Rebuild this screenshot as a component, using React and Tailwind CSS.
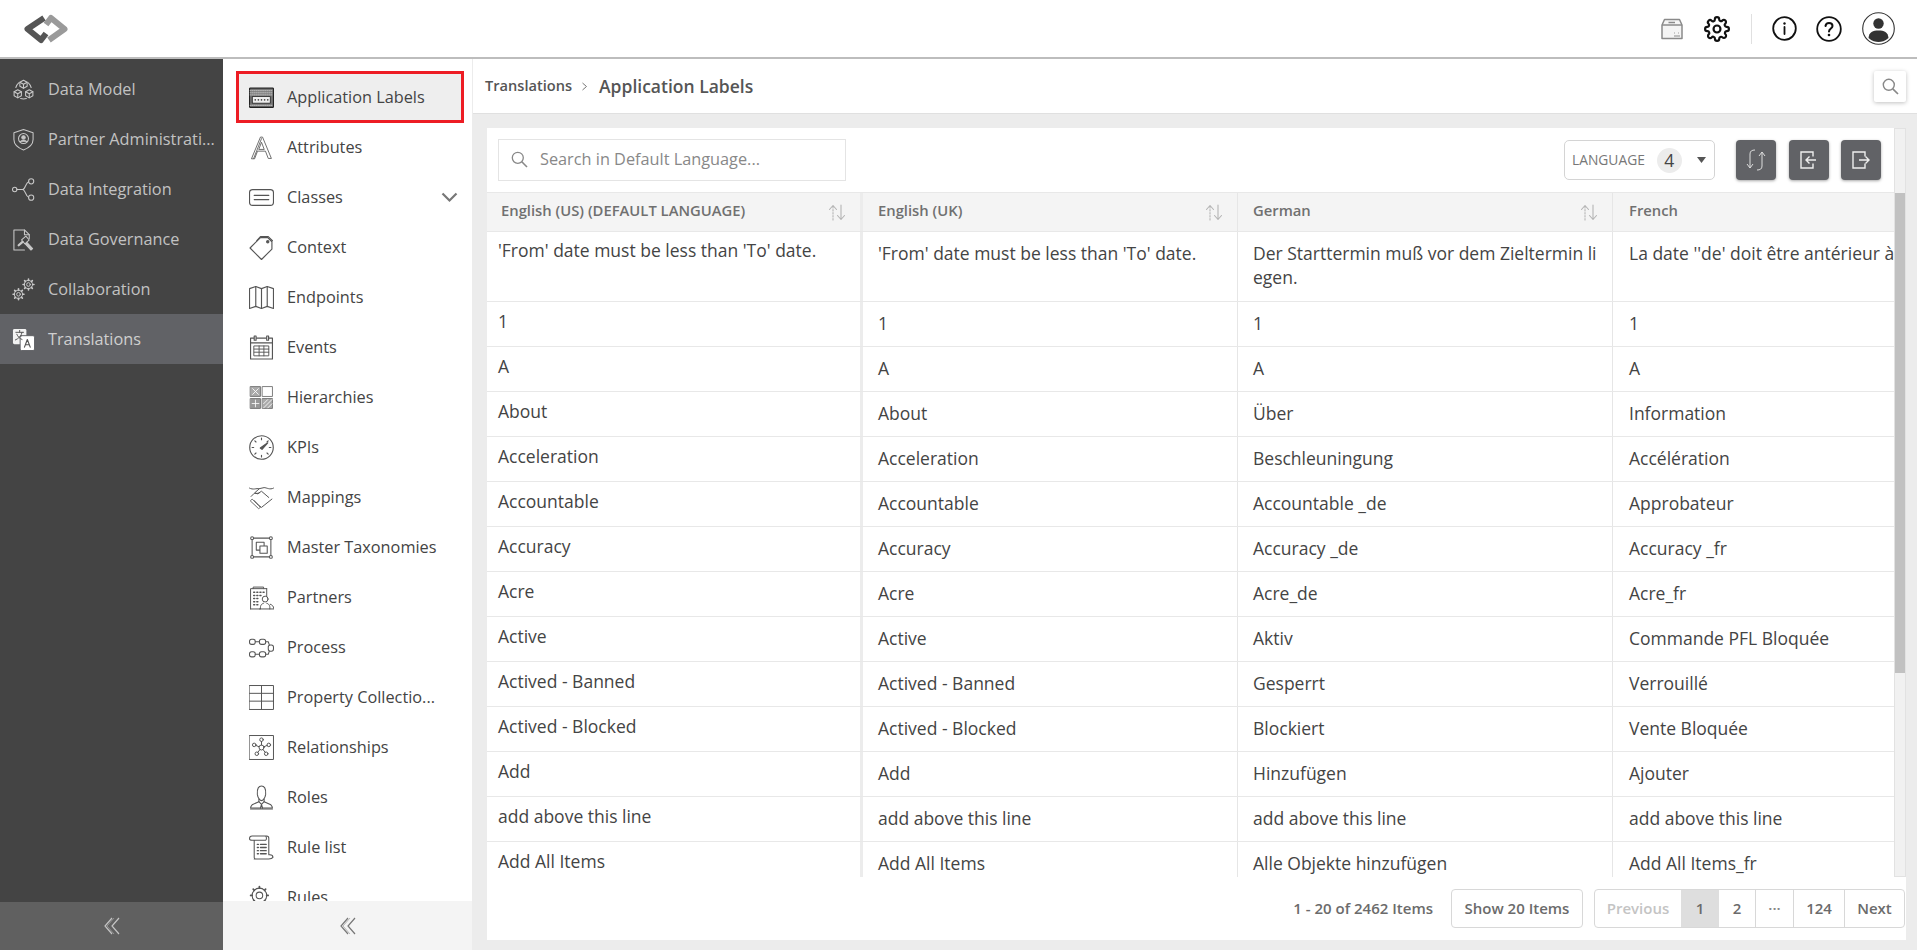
import React from 'react';

const S = ({ children, size = 25, className = '', sw = 1.1, stroke = 'currentColor' }) => (
  <svg width={size} height={size} viewBox="0 0 24 24" fill="none" stroke={stroke} strokeWidth={sw} strokeLinecap="round" strokeLinejoin="round" className={`shrink-0 ${className}`}>
    {children}
  </svg>
);

const Cube = ({ x, y }) => (
  <g transform={`translate(${x} ${y})`}>
    <path d="M0 -4.2 3.8 -2.1V2.1L0 4.2 -3.8 2.1V-2.1Z" />
    <path d="M-3.8 -2.1 0 0 3.8 -2.1M0 0V4.2" />
  </g>
);

const Gear = ({ x, y, r = 4 }) => {
  const t = [0, 45, 90, 135, 180, 225, 270, 315];
  return (
    <g transform={`translate(${x} ${y})`}>
      <circle r={r} />
      <circle r={r * 0.45} />
      {t.map((a) => (
        <path key={a} d={`M0 ${-r}V${-r - 1.4}`} strokeWidth="1.7" transform={`rotate(${a})`} />
      ))}
    </g>
  );
};

const Icons = {
  dataModel: <S><Cube x={12} y={6.5} /><Cube x={6} y={16.5} /><Cube x={18} y={16.5} /><path d="M4 10A9 9 0 0 1 7 5M20 10A9 9 0 0 0 17 5M9 21.5A10 10 0 0 0 15 21.5" /></S>,
  partner: <S><path d="M12 1.500 22 5V12C22 17.500 17 21 12 23 7 21 2 17.500 2 12V5Z" /><circle cx="12" cy="11" r="5.200" /><circle cx="12" cy="9.800" r="1.800" fill="currentColor" /><path d="M8.800 14.400C9.500 12.800 14.500 12.800 15.200 14.400" fill="currentColor" /></S>,
  integ: <S><circle cx="2.800" cy="12" r="2.300" /><circle cx="20" cy="3.500" r="2.700" /><circle cx="20" cy="20.500" r="2.700" /><path d="M5.100 12H11C14 12 14 5 17.400 3.800M11 12C14 12 14 19 17.400 20.200" /></S>,
  gov: <S><path d="M13 23H2V2H13L18 7V11" /><path d="M13 2V7H18" /><path d="M10 12.500 14.500 8.500 18 12.500 13.500 16.500Z" /><path d="M15.500 15 21.500 21.500 19.800 23 13.800 16.500" fill="currentColor" /><path d="M7 18 11 14.500" strokeWidth="2.400" /></S>,
  collab: <S sw={1}><Gear x={6.800} y={17} r={4.300} /><Gear x={17.200} y={6.800} r={4.300} /></S>,
  translate: <S sw={0}><rect x="1" y="1" width="14" height="16" rx="1.500" fill="#f2f2f2" stroke="none" /><rect x="8.500" y="8" width="15" height="15.500" rx="1.500" fill="#fff" stroke="#616266" strokeWidth="1" /><path d="M4 4.500H12M8 2.500V4.500M10.500 4.500C10 8 7 11 3.500 12.500M5 6.500C6 9 8 11 10.500 12" stroke="#555" strokeWidth="1" /><path d="M13 20 16 12 19 20M14 17.500H18" stroke="#555" strokeWidth="1.200" /></S>,
  appLabels: <S><rect x="0.500" y="3" width="23" height="18.500" rx="0.800" fill="#777" stroke="#222" /><rect x="3.500" y="11" width="17" height="6.500" fill="#eee" stroke="#222" strokeWidth="0.800" /><path d="M6 14.200H6.010M9 14.200H9.010M12 14.200H12.010M15 14.200H15.010M18 14.200H18.010" strokeWidth="1.600" /><path d="M1 5.500H23M1 7.500H23M1 9.500H23M1 19.500H23" stroke="#ddd" strokeWidth="0.700" strokeDasharray="1 1" /></S>,
  attributes: <S sw={0.8}><path d="M2.500 22.500 11 2H13L21.500 22.500H18.500L15.800 15.500H8.200L5.500 22.500Z" /><path d="M9.500 13.500 12 7 14.500 13.500Z" /><path d="M4.500 22.500 12 3.500" /></S>,
  classes: <S><rect x="0.500" y="4.500" width="23" height="15" rx="3" /><path d="M5 10H19M5 14H19" /></S>,
  context: <S><path d="M1 12.500 11 2.500H18L22 6.500V13.500L12 23.500Z" /><path d="M7.500 5.500 11 1.500H18.500L22.500 5.500" /><circle cx="18" cy="6.500" r="1.100" fill="currentColor" /></S>,
  endpoints: <S><path d="M0.500 3.500 6.500 1.500 12 3.500 17.500 1.500 23.500 3.500V22.500L17.500 20.500 12 22.500 6.500 20.500 0.500 22.500Z" /><path d="M6.500 1.500V20.500M12 3.500V22.500M17.500 1.500V20.500" /></S>,
  events: <S><rect x="1.500" y="3" width="21" height="20" /><path d="M1.500 7.500H22.500" /><path d="M5 10.500H19V20H5ZM5 13.500H19M5 16.500H19M9.700 10.500V20M14.300 10.500V20" strokeWidth="0.900" /><rect x="5" y="1" width="1.800" height="4" fill="#fff" /><rect x="17" y="1" width="1.800" height="4" fill="#fff" /></S>,
  hierarchies: <S sw={0.9} stroke="#777"><rect x="1.500" y="1.500" width="9.500" height="9.500" fill="#aaa" /><rect x="13" y="1.500" width="9.500" height="9.500" /><rect x="1.500" y="13" width="9.500" height="9.500" fill="#999" /><rect x="13" y="13" width="9.500" height="9.500" fill="#aaa" /><path d="M3.500 3.500 9 9M9 3.500 3.500 9M6.200 14.500V21M3 17.800H9.500M14 22 22 14M14 18 18 14M18 22 22 18" stroke="#fff" strokeWidth="0.800" /></S>,
  kpis: <S><circle cx="12" cy="12" r="11.300" /><path d="M12 3V4.500M3 12H4.500M21 12H19.500M5.600 5.600 6.700 6.700M18.400 5.600 17.300 6.700M5.600 18.400 6.700 17.300M18.400 18.400 17.300 17.300M12 21V19.500" /><path d="M10.800 12.500 18 7.500 12.500 13.800Z" fill="currentColor" /></S>,
  mappings: <S sw={0.95}><path d="M0.500 3C4 5 7 3 10 3.500L14.500 2.500C17 2.500 20 5 23.500 3" /><path d="M2 11 5 8H9.500M5 15 10 20 12 21.500 14.500 19.500 22 13.500" /><path d="M10 3.500 5.500 7.500 8 8.500 12 6 19 12" /><path d="M1.500 15 3 13.500 5 15.500 7 17.500 9 19.500 11 21.500 9.500 22.500Z" strokeWidth="0.800" /></S>,
  master: <S sw={1}><path d="M3 3H21V21H3Z" /><circle cx="3" cy="3" r="1.400" fill="#fff" /><circle cx="21" cy="3" r="1.400" fill="#fff" /><circle cx="3" cy="21" r="1.400" fill="#fff" /><circle cx="21" cy="21" r="1.400" fill="#fff" /><rect x="7" y="7" width="7.500" height="7.500" /><rect x="10.500" y="10.500" width="7" height="7" fill="#fff" /></S>,
  partners: <S sw={0.95}><path d="M1.500 23V3.500H14V2H4V3.500M17 3.500H14M17 3.500V11M1.500 23H10" /><path d="M4.500 7H5.500M7.500 7H8.500M10.500 7H11.500M13.500 7H14.500M4.500 10H5.500M7.500 10H8.500M10.500 10H11.500M4.500 13H5.500M7.500 13H8.500M4.500 16H5.500M7.500 16H8.500M4.500 19H5.500M7.500 19H8.500" strokeWidth="1.400" /><circle cx="15.500" cy="13.500" r="2.800" /><path d="M11 23C10.500 19 12.500 18 14 17.500M20 23C20.500 19 18.500 18 17 17.500M10 23H24C23.500 20 22 19 20.500 18.500" /></S>,
  process: <S sw={1}><rect x="0.500" y="4" width="5.500" height="5" rx="2" /><rect x="10" y="4" width="6" height="5" rx="2" /><rect x="0.500" y="16" width="5.500" height="5" rx="2" /><rect x="10" y="16" width="6" height="5" rx="2" /><path d="M6 6.500H10M6 18.500H10M16 6.500H18.500L19.500 9.500M16 18.500H18.500L19.500 15.500" /><rect x="18.500" y="9.500" width="5" height="6" rx="2" /></S>,
  property: <S sw={0.95}><rect x="0.500" y="0.500" width="23" height="23" /><path d="M12 0.500V23.500M0.500 8H23.500M0.500 15.500H23.500" /></S>,
  relationships: <S sw={0.95}><rect x="0.500" y="0.500" width="23" height="23" /><circle cx="12" cy="12" r="2.400" /><circle cx="12" cy="4.500" r="1.700" /><circle cx="5" cy="9.500" r="1.700" /><circle cx="19" cy="9.500" r="1.700" /><circle cx="7.500" cy="18" r="1.700" /><circle cx="16.500" cy="18" r="1.700" /><path d="M12 6.200V9.600M6.600 10 9.700 11.300M17.400 10 14.300 11.300M8.500 16.600 10.500 14M15.500 16.600 13.500 14" /></S>,
  roles: <S sw={1}><path d="M8 9C7.500 3 9.500 1 12 1S16.500 3 16 9C15.500 13 13 15 12 15S8.500 13 8 9Z" /><path d="M9.500 13.500V16L3 19C2 20 1.500 21 1.500 22H22.500C22.500 21 22 20 21 19L14.500 16V13.500" /><path d="M9.500 16 12 18.500 14.500 16M12 18.500 11 22M12 18.500 13 22M1.500 23H22.500" /></S>,
  ruleList: <S sw={1}><path d="M5 23H19C21 23 22 23 23 21.500 23 19.500 21.500 19 20 19H19V3C19 1.500 18 1 17 1H3C1 1 0.500 2.500 0.500 3.500S1.500 5 3 5H5V21.500C5 22.500 5.500 23 6.500 23M16 1C17 2 17 4.500 16 5H5" /><path d="M8 9H9M11 9H16.500M8 12H9M11 12H16.500M8 15H9M11 15H16.500M8 18H9M11 18H16.500" strokeWidth="1.300" /></S>,
  rules: <S sw={1}><Gear x={10} y={10} r={7} /><path d="M14 22 18 17H23V22Z" fill="#888" /></S>,
};

const nav = [
  ['Data Model', 'dataModel'],
  ['Partner Administrati...', 'partner'],
  ['Data Integration', 'integ'],
  ['Data Governance', 'gov'],
  ['Collaboration', 'collab'],
  ['Translations', 'translate', true],
];

const sub = [
  ['Attributes', 'attributes'],
  ['Classes', 'classes', true],
  ['Context', 'context'],
  ['Endpoints', 'endpoints'],
  ['Events', 'events'],
  ['Hierarchies', 'hierarchies'],
  ['KPIs', 'kpis'],
  ['Mappings', 'mappings'],
  ['Master Taxonomies', 'master'],
  ['Partners', 'partners'],
  ['Process', 'process'],
  ['Property Collectio...', 'property'],
  ['Relationships', 'relationships'],
  ['Roles', 'roles'],
  ['Rule list', 'ruleList'],
  ['Rules', 'rules'],
];

const rows = [
  ['1', '1', '1', '1'],
  ['A', 'A', 'A', 'A'],
  ['About', 'About', 'Über', 'Information'],
  ['Acceleration', 'Acceleration', 'Beschleuningung', 'Accélération'],
  ['Accountable', 'Accountable', 'Accountable _de', 'Approbateur'],
  ['Accuracy', 'Accuracy', 'Accuracy _de', 'Accuracy _fr'],
  ['Acre', 'Acre', 'Acre_de', 'Acre_fr'],
  ['Active', 'Active', 'Aktiv', 'Commande PFL Bloquée'],
  ['Actived - Banned', 'Actived - Banned', 'Gesperrt', 'Verrouillé'],
  ['Actived - Blocked', 'Actived - Blocked', 'Blockiert', 'Vente Bloquée'],
  ['Add', 'Add', 'Hinzufügen', 'Ajouter'],
  ['add above this line', 'add above this line', 'add above this line', 'add above this line'],
  ['Add All Items', 'Add All Items', 'Alle Objekte hinzufügen', 'Add All Items_fr'],
];

const Logo = () => (
  <svg width="46" height="32" viewBox="0 0 46 32" fill="none" strokeWidth="6" strokeLinejoin="round" strokeLinecap="butt">
    <path d="M26 27 41.500 16 28 5 23 11.500" stroke="#9a9a9a" />
    <path d="M21 5 4.500 16 18 27 23 20.500" stroke="#555" />
  </svg>
);

const SortIcon = () => (
  <svg width="18" height="17" viewBox="0 0 18 17" fill="none" stroke="#b5b5b5" strokeWidth="1.100" strokeLinecap="round" strokeLinejoin="round">
    <path d="M5 16V2" strokeDasharray="1.500 1.500" />
    <path d="M1.500 5.500 5 1.500 8.500 5.500" />
    <path d="M13 1V15M9.500 11.500 13 15.500 16.500 11.500" />
  </svg>
);

const HeaderCell = ({ w, label, sort, thick }) => (
  <div className={`flex h-full items-center justify-between shrink-0 ${w} ${thick ? 'border-r-[3px] border-[#ececec] pl-[14px] pr-[14px]' : 'border-r border-[#e6e6e6] pl-[15px] pr-[14px]'}`}>
    <span className="pb-[3px] text-[14.8px] font-semibold text-[#707070] whitespace-nowrap">{label}</span>
    {sort && <SortIcon />}
  </div>
);

const Cell = ({ w, first, children, last }) => (
  <div className={`flex h-full items-center shrink-0 text-[17.5px] leading-[24px] text-[#444] ${w} ${first ? 'border-r-[3px] border-[#ececec] pl-[11px] pb-[6px]' : last ? 'pl-[16px] pb-[3px]' : 'border-r border-[#e6e6e6] pl-[15px] pb-[3px]'}`}>
    <span className="whitespace-nowrap">{children}</span>
  </div>
);

const cols = ['w-[376px]', 'w-[375px]', 'w-[375px]', 'w-[283px]'];

export default function App() {
  return (
    <div className="flex h-[950px] w-[1917px] flex-col overflow-hidden bg-white text-[#444]" style={{ fontFamily: '"Open Sans", sans-serif' }}>
      <header className="flex h-[59px] shrink-0 items-center justify-between border-b-2 border-[#bdbdbd] bg-white pl-[23px] pr-[22px]">
        <Logo />
        <div className="flex items-center">
          <svg width="22" height="22" viewBox="0 0 22 22" fill="none" stroke="#8a8a8a" strokeWidth="1.500" strokeLinejoin="round" className="mr-[21px]">
            <path d="M1 7 3.500 1.500H18.500L21 7V20.500H1Z" fill="#f4f4f4" />
            <path d="M1 7H21M7.500 4.500H14" />
            <path d="M13 15H13.800M17 15H17.800M13 18H19" strokeWidth="1.200" />
          </svg>
          <svg width="26" height="26" viewBox="0 0 24 24" fill="none" stroke="#111" strokeWidth="2" strokeLinecap="round" strokeLinejoin="round" className="mr-[21px]">
            <circle cx="12" cy="12" r="3.200" />
            <path d="M19.400 15a1.650 1.650 0 0 0 .33 1.820l.06.06a2 2 0 1 1-2.830 2.830l-.06-.06a1.650 1.650 0 0 0-2.820 1.170V21a2 2 0 1 1-4 0v-.09A1.650 1.650 0 0 0 7.180 19.730l-.06.06a2 2 0 1 1-2.830-2.830l.06-.06A1.650 1.650 0 0 0 3.180 14H3a2 2 0 1 1 0-4h.09A1.650 1.650 0 0 0 4.270 7.180l-.06-.06a2 2 0 1 1 2.830-2.830l.06.06A1.650 1.650 0 0 0 10 3.180V3a2 2 0 1 1 4 0v.09a1.650 1.650 0 0 0 2.820 1.170l.06-.06a2 2 0 1 1 2.830 2.830l-.06.06A1.650 1.650 0 0 0 20.820 10H21a2 2 0 1 1 0 4h-.09a1.650 1.650 0 0 0-1.510 1Z" />
          </svg>
          <div className="mr-[20px] h-[30px] w-px bg-[#e0e0e0]" />
          <svg width="25" height="25" viewBox="0 0 25 25" fill="none" stroke="#111" strokeWidth="1.800" strokeLinecap="round" className="mr-[19px]">
            <circle cx="12.500" cy="12.500" r="11.300" />
            <path d="M12.500 11V18" />
            <circle cx="12.500" cy="7.500" r="1.200" fill="#111" stroke="none" />
          </svg>
          <svg width="26" height="26" viewBox="0 0 26 26" fill="none" stroke="#111" strokeWidth="1.800" strokeLinecap="round" className="mr-[20px]">
            <circle cx="13" cy="13" r="11.800" />
            <path d="M9.500 10C9.800 7.800 11.300 7 13 7 15 7 16.500 8.300 16.500 10 16.500 12.500 13 12.500 13 15.500" strokeWidth="2" />
            <circle cx="13" cy="19" r="1.300" fill="#111" stroke="none" />
          </svg>
          <svg width="33" height="33" viewBox="0 0 33 33" fill="none">
            <circle cx="16.500" cy="16.500" r="15.800" stroke="#333" strokeWidth="1.100" />
            <circle cx="16.500" cy="11.500" r="5.200" fill="#333" />
            <path d="M6.500 26C7 20 11 18.500 16.500 18.500S26 20 26.500 26C23 29 19.500 30 16.500 30S10 29 6.500 26Z" fill="#333" />
          </svg>
        </div>
      </header>

      <div className="flex min-h-0 flex-1">
        <aside className="flex w-[223px] shrink-0 flex-col bg-[#444444]">
          <nav className="flex-1 pt-[5px]">
            {nav.map(([label, icon, active]) => (
              <div key={label} className={`flex h-[50px] items-center gap-[13px] pl-[12px] text-[16.3px] ${active ? 'bg-[#616266] text-[#cfcfcf]' : 'text-[#c2c2c2]'}`}>
                <span className={active ? 'text-white' : 'text-[#c8c8c8]'}>{React.cloneElement(Icons[icon], { size: 23 })}</span>
                <span className="whitespace-nowrap">{label}</span>
              </div>
            ))}
          </nav>
          <div className="flex h-[48px] shrink-0 items-center justify-center bg-[#606060]">
            <svg width="16" height="18" viewBox="0 0 16 18" fill="none" stroke="#c4c4c4" strokeWidth="1.200" strokeLinejoin="miter"><path d="M8 1 1 9 8 17M15 1 8 9 15 17" /><path d="M10 1 3 9 10 17" strokeWidth="0.500" /></svg>
          </div>
        </aside>

        <aside className="flex w-[249px] shrink-0 flex-col bg-white">
          <div className="min-h-0 flex-1 overflow-hidden pl-[13px] pr-[8px] pt-[12px]">
            <div className="-mb-px box-border flex h-[52px] items-center gap-[13px] border-[3px] border-[#ed1c24] bg-[#eeeeee] pl-[10px] text-[16.3px] text-[#444]">
              {Icons.appLabels}
              <span className="whitespace-nowrap">Application Labels</span>
            </div>
            {sub.map(([label, icon, more]) => (
              <div key={label} className="flex h-[50px] shrink-0 items-center gap-[13px] pl-[13px] text-[16.3px] text-[#444]">
                <span className="text-[#555]">{Icons[icon]}</span>
                <span className="flex-1 whitespace-nowrap">{label}</span>
                {more && (
                  <svg width="17" height="11" viewBox="0 0 17 11" fill="none" stroke="#777" strokeWidth="2.200" className="mr-[6px]"><path d="M1.500 1.500 8.500 8.500 15.500 1.500" /></svg>
                )}
              </div>
            ))}
          </div>
          <div className="flex h-[49px] shrink-0 items-center justify-center bg-[#f4f4f4]">
            <svg width="16" height="18" viewBox="0 0 16 18" fill="none" stroke="#777" strokeWidth="1.200"><path d="M8 1 1 9 8 17M15 1 8 9 15 17" /><path d="M10 1 3 9 10 17" strokeWidth="0.500" /></svg>
          </div>
        </aside>

        <main className="flex min-w-0 flex-1 flex-col bg-[#ececec] pl-px">
          <div className="flex h-[55px] shrink-0 items-center justify-between border-b border-[#e0e0e0] bg-white pl-[12px] pr-[11px]">
            <div className="flex items-center">
              <span className="text-[14.6px] font-semibold text-[#555]">Translations</span>
              <svg width="7" height="9" viewBox="0 0 7 9" fill="none" stroke="#777" strokeWidth="1" className="ml-[9px] mr-[11px]"><path d="M1.500 1 5.500 4.500 1.500 8" /></svg>
              <span className="text-[17.5px] font-semibold text-[#555]">Application Labels</span>
            </div>
            <div className="flex h-[31px] w-[32px] items-center justify-center rounded-[2px] bg-white shadow-[0_1px_4px_rgba(0,0,0,0.25)]">
              <svg width="17" height="17" viewBox="0 0 17 17" fill="none" stroke="#888" strokeWidth="1.400"><circle cx="6.800" cy="6.800" r="5.500" /><path d="M10.800 10.800 16 16" strokeWidth="1.700" /></svg>
            </div>
          </div>

          <div className="relative ml-[14px] mr-[11px] mt-[14px] flex h-[812px] flex-col bg-white">
            <div className="absolute right-0 top-0 bottom-[63px] w-[12px] border border-[#e2e2e2] bg-[#f1f1f1]">
              <div className="mt-[64px] h-[480px] bg-[#c1c1c1]" />
            </div>
            <div className="flex h-[64px] shrink-0 items-center justify-between pl-[11px] pr-[25px]">
              <div className="flex h-[42px] w-[348px] items-center gap-[12px] border border-[#e4e4e4] pb-[1px] pl-[12px]">
                <svg width="17" height="17" viewBox="0 0 17 17" fill="none" stroke="#888" strokeWidth="1.300"><circle cx="6.800" cy="6.800" r="5.500" /><path d="M10.800 10.800 16 16" strokeWidth="1.600" /></svg>
                <span className="text-[16.3px] text-[#888]">Search in Default Language...</span>
              </div>
              <div className="flex items-center">
                <div className="mr-[21px] flex h-[40px] w-[151px] items-center rounded-[5px] border border-[#d4d4d4] pl-[7px]">
                  <span className="text-[13.8px] text-[#777]">LANGUAGE</span>
                  <span className="ml-[12px] flex h-[25px] w-[25px] shrink-0 items-center justify-center rounded-full bg-[#ececec] text-[17.5px] text-[#444]">4</span>
                  <svg width="9" height="6" viewBox="0 0 9 6" className="ml-[15px] shrink-0"><path d="M0 0H9L4.500 6Z" fill="#555" /></svg>
                </div>
                <div className="flex">
                  <div className="flex h-[40px] w-[40px] items-center justify-center rounded-[4px] bg-[#616266] shadow-[0_1px_3px_rgba(0,0,0,0.35)]">
                    <svg width="20" height="22" viewBox="0 0 20 22" fill="none" stroke="#ddd" strokeWidth="1"><path d="M1 15 4 19 7 15M4 19V5C4 2 6 1 9 1M19 7 16 3 13 7M16 3V17C16 20 14 21 11 21" /></svg>
                  </div>
                  <div className="ml-[13px] flex h-[40px] w-[40px] items-center justify-center rounded-[4px] bg-[#616266] shadow-[0_1px_3px_rgba(0,0,0,0.35)]">
                    <svg width="18" height="18" viewBox="0 0 18 18" fill="none" stroke="#eee" strokeWidth="1.400"><path d="M13 5.500V1H1V17H13V12.500" /><path d="M16 9H6M9.500 5.500 6 9 9.500 12.500" /></svg>
                  </div>
                  <div className="ml-[12px] flex h-[40px] w-[40px] items-center justify-center rounded-[4px] bg-[#616266] shadow-[0_1px_3px_rgba(0,0,0,0.35)]">
                    <svg width="18" height="18" viewBox="0 0 18 18" fill="none" stroke="#eee" strokeWidth="1.400"><path d="M13 5.500V1H1V17H13V12.500" /><path d="M7 9H17M13.500 5.500 17 9 13.500 12.500" /></svg>
                  </div>
                </div>
              </div>
            </div>

            <div className="min-h-0 flex-1 overflow-hidden pr-[12px]">
              <div className="flex h-[40px] items-center border-y border-[#e8e8e8] bg-[#f4f4f4]">
                <HeaderCell w={cols[0]} label="English (US) (DEFAULT LANGUAGE)" sort thick />
                <HeaderCell w={cols[1]} label="English (UK)" sort />
                <HeaderCell w={cols[2]} label="German" sort />
                <div className="pb-[3px] pl-[16px] text-[14.8px] font-semibold text-[#707070]">French</div>
              </div>
              <div className="flex h-[70px] overflow-hidden border-b border-[#e8e8e8] text-[17.5px] leading-[24px] text-[#444]">
                <div className="w-[376px] shrink-0 border-r-[3px] border-[#ececec] pl-[11px] pt-[6px]">'From' date must be less than 'To' date.</div>
                <div className="w-[375px] shrink-0 border-r border-[#e6e6e6] pl-[15px] pt-[9px]">'From' date must be less than 'To' date.</div>
                <div className="w-[375px] shrink-0 break-all border-r border-[#e6e6e6] pl-[15px] pr-[8px] pt-[9px]">Der Starttermin muß vor dem Zieltermin liegen.</div>
                <div className="whitespace-nowrap pl-[16px] pt-[9px]">La date ''de' doit être antérieur à</div>
              </div>
              {rows.map((r, i) => (
                <div key={i} className="flex h-[45px] border-b border-[#e8e8e8]">
                  <Cell w={cols[0]} first>{r[0]}</Cell>
                  <Cell w={cols[1]}>{r[1]}</Cell>
                  <Cell w={cols[2]}>{r[2]}</Cell>
                  <Cell w={cols[3]} last>{r[3]}</Cell>
                </div>
              ))}
            </div>

            <div className="flex h-[63px] shrink-0 items-center justify-end gap-[11px] pr-[1px] text-[15px] font-semibold text-[#6b6b6b]">
              <span className="mr-[7px]">1 - 20 of 2462 Items</span>
              <div className="flex h-[39px] w-[132px] items-center justify-center rounded-[4px] border border-[#d8d8d8]">Show 20 Items</div>
              <div className="flex h-[39px] items-stretch overflow-hidden rounded-[4px] border border-[#d8d8d8]">
                <div className="flex w-[86px] items-center justify-center text-[#c4c4c4]">Previous</div>
                <div className="flex w-[38px] items-center justify-center bg-[#dedede]">1</div>
                <div className="flex w-[37px] items-center justify-center border-r border-[#d8d8d8]">2</div>
                <div className="flex w-[38px] items-center justify-center border-r border-[#d8d8d8] text-[#888]">···</div>
                <div className="flex w-[51px] items-center justify-center border-r border-[#d8d8d8]">124</div>
                <div className="flex w-[59px] items-center justify-center">Next</div>
              </div>
            </div>
          </div>
        </main>
      </div>
    </div>
  );
}
